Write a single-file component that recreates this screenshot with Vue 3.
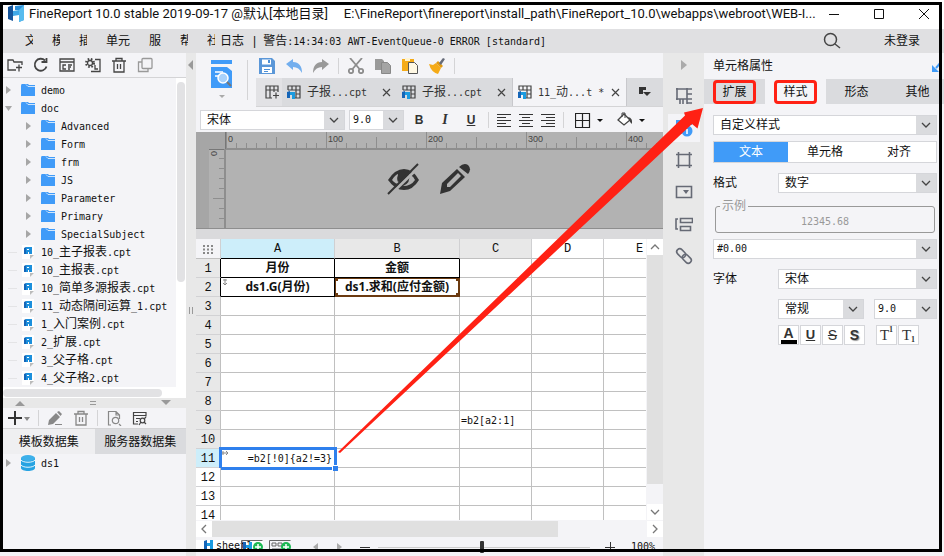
<script setup>
import { h } from 'vue'

// Latin runs are set in a half-width mono face, Chinese runs in the full-width face.
const Mixed = (props) =>
  h('span', { class: 'mixed' }, props.text.match(/[\x20-\x7e]+|[^\x20-\x7e]+/g).map((run) =>
    h('span', { class: run.charCodeAt(0) < 127 ? 'latin' : 'han' }, run)))
Mixed.props = ['text']

const menus = [
  { label: '文', cut: true }, { label: '模', cut: true }, { label: '插', cut: true },
  { label: '单元', cut: false }, { label: '服', cut: false },
  { label: '帮', cut: true }, { label: '社', cut: true }
]
const tree = [
  { name: 'demo', kind: 'folder', depth: 0 },
  { name: 'doc', kind: 'folder', depth: 0, open: true },
  ...['Advanced', 'Form', 'frm', 'JS', 'Parameter', 'Primary', 'SpecialSubject']
    .map((name) => ({ name, kind: 'folder', depth: 1 })),
  ...['10_主子报表.cpt', '10_主报表.cpt', '10_简单多源报表.cpt', '11_动态隔间运算_1.cpt',
    '1_入门案例.cpt', '2_扩展.cpt', '3_父子格.cpt', '4_父子格2.cpt']
    .map((name) => ({ name, kind: 'file', depth: 0 }))
]
const docs = [
  { name: '子报...cpt' }, { name: '子报...cpt' }, { name: '11_动...t *', active: true }
]
const columns = ['A', 'B', 'C', 'D', 'E']
const cells = {
  A1: '月份', B1: '金额', A2: 'ds1.G(月份)', B2: 'ds1.求和(应付金额)',
  C9: '=b2[a2:1]', A11: '=b2[!0]{a2!=3}'
}
const cellClass = (c, r) => ({
  boxed: r <= 2 && (c === 'A' || c === 'B'),
  linked: c + r === 'B2',
  chosen: c + r === 'A11'
})
const ticks = Array.from({ length: 120 }, (_, i) => i)
const tickSize = (i) => (i % 10 === 0 ? 16 : i % 5 === 0 ? 11 : 5)
const propTabs = [
  { label: '扩展', mark: true }, { label: '样式', mark: true, active: true },
  { label: '形态' }, { label: '其他' }
]
</script>

<template>
  <div class="app">
    <header class="title">
      <svg class="logo" width="16" height="17" viewBox="0 0 16 17"><path d="M0 2l5-2v16l-5-2z" fill="#15549a"/><path d="M5 6l6-1v5l-6 1z" fill="#3fa9e8"/><path d="M7 1l9-1v15l-5 2V5H7z" fill="#2b8fd9"/><path d="M11 5l5-5v15l-5 2z" fill="#57bbee"/></svg>
      <span class="name">FineReport 10.0 stable 2019-09-17 @默认[本地目录]</span>
      <span class="path">E:\FineReport\finereport\install_path\FineReport_10.0\webapps\webroot\WEB-I...</span>
      <div class="window">
        <button aria-label="最小化"><svg width="12" height="12"><path d="M1 6.500h10" stroke="#111"/></svg></button>
        <button aria-label="最大化"><svg width="12" height="12"><path d="M1.500 1.500h9v9h-9z" stroke="#111" fill="none"/></svg></button>
        <button aria-label="关闭"><svg width="12" height="12"><path d="M1 1l10 10M11 1L1 11" stroke="#111"/></svg></button>
      </div>
    </header>

    <nav class="menu">
      <button v-for="m in menus" :key="m.label" :class="{ cut: m.cut }">{{ m.label }}</button>
      <button class="log">日志</button>
      <span class="bar">|</span>
      <Mixed text="警告:14:34:03 AWT-EventQueue-0 ERROR [standard]" />
      <button class="search" aria-label="搜索"><svg width="18" height="18" fill="none" stroke="#444" stroke-width="1.500"><circle cx="7.500" cy="7.500" r="6"/><path d="M12 12l5 4"/></svg></button>
      <a class="login" href="#">未登录</a>
    </nav>

    <div class="body">
      <aside class="left">
        <div class="tools">
          <button aria-label="新建文件夹"><svg width="16" height="16" fill="none" stroke="#444" stroke-width="1.300"><path d="M9 13H1V3h5l1 2h8v3M9 10.500h6M12 7.500v7"/></svg></button>
          <button aria-label="刷新"><svg width="16" height="16" fill="none" stroke="#444" stroke-width="1.800"><path d="M13.500 9.500A6 6 0 1 1 12 3.500M13.500 1v4h-5"/></svg></button>
          <button aria-label="目录"><svg width="16" height="16" fill="none" stroke="#444" stroke-width="1.300"><path d="M1 2h14v12H1zM1 5h14M7 8H4v4h3M9 8h4M9 10h3M9 12h2"/></svg></button>
          <button aria-label="设置"><svg width="16" height="16" fill="none" stroke="#444" stroke-width="1.300"><circle cx="5" cy="6" r="2.500"/><circle cx="5" cy="6" r="4" stroke-width="2" stroke-dasharray="1.600 1.600"/><path d="M10 2.500h5v12H6M10 8v4h3"/></svg></button>
          <button aria-label="删除"><svg width="16" height="16" fill="none" stroke="#444" stroke-width="1.300"><path d="M1 4h14M5 4V1.500h6V4M3 4v11h10V4M6.500 7v5M9.500 7v5"/></svg></button>
          <button aria-label="复制"><svg width="16" height="16" fill="none" stroke="#999" stroke-width="1.300"><rect x="5" y="1.500" width="10" height="10" rx="1"/><path d="M5 5H1.500v9.500H11v-3"/></svg></button>
        </div>
        <div class="tree-area">
          <ul class="tree">
            <li v-for="n in tree" :key="n.name" :class="{ child: n.depth }">
              <svg class="twist" width="18" height="18"><path v-if="n.kind === 'file'" d="M5 9.500h9" stroke="#e4e4e6"/><path v-else-if="n.open" d="M2 7h7l-3.500 5z" fill="#a6a6a6"/><path v-else d="M3 5v8l5-4z" fill="#a6a6a6"/></svg>
              <svg v-if="n.kind === 'folder'" width="14" height="14"><path d="M0 3q0-2 1-2h6l1 1h6v11H0z" fill="#409bf8"/><path d="M5 1.500l2 2h7" stroke="#cfe5fc" fill="none"/></svg>
              <svg v-else width="14" height="14"><path d="M1 0h12v10l-4 4H1z" fill="#fff"/><path d="M13 10l-4 4v-4z" fill="#bbb"/><path d="M3 3l2-1v7H3z" fill="#1565b8"/><path d="M5 2h6v7H8V7H7v2H5z" fill="#1b8fdc"/><path d="M6 4h2v1H6z" fill="#fff"/></svg>
              <Mixed :text="n.name" />
            </li>
          </ul>
          <div class="track-v"><i></i></div>
        </div>
        <div class="track-h"><i></i></div>
        <div class="grip"><svg width="10" height="6"><path d="M0 6l5-5 5 5z" fill="#999"/></svg><svg width="8" height="6"><path d="M1 1.500h6M1 4.500h6" stroke="#999"/></svg><svg width="10" height="6"><path d="M0 0h10L5 5z" fill="#999"/></svg></div>
        <div class="tools data">
          <button aria-label="添加"><svg width="22" height="16"><path d="M0 8h14M7 1v14" stroke="#333" stroke-width="2"/><path d="M16 7h6l-3 4z" fill="#888"/></svg></button>
          <i></i>
          <button aria-label="编辑"><svg width="16" height="16"><path d="M1 15l1-5 7-7 4 4-7 7zM10 2l2-1 3 3-1.500 2zM8 14h7v1H8z" fill="#888"/></svg></button>
          <button class="bin" aria-label="删除"><svg width="16" height="16" fill="none" stroke="#888" stroke-width="1.300"><path d="M1 4h14M5 4V1.500h6V4M3 4v11h10V4M6.500 7v5M9.500 7v5"/></svg></button>
          <i></i>
          <button aria-label="预览"><svg width="16" height="16" fill="none" stroke="#888" stroke-width="1.200"><path d="M5 15H2.500V1.500H10l3.500 3.500v4M10 1.500V5h3.500M13 14l2 2"/><circle cx="9.500" cy="10.500" r="3.200"/></svg></button>
          <button class="bin" aria-label="连接"><svg width="16" height="16" fill="none" stroke="#444" stroke-width="1.200"><path d="M6 14H1.500V2.500h12.500v4M1.500 5.500H14M4 8.500h4M4 11.500h2"/><circle cx="10.500" cy="10.500" r="2.300"/><path d="M12 9l2-2M9 12l-2 3M12 12l2 2"/></svg></button>
        </div>
        <div class="sets" role="tablist">
          <button role="tab" aria-selected="true" class="on">模板数据集</button>
          <button role="tab">服务器数据集</button>
        </div>
        <ul class="tree source">
          <li>
            <svg class="twist" width="18" height="18"><path d="M3 5v8l5-4z" fill="#a6a6a6"/></svg>
            <svg width="14" height="16"><path d="M0 3v10c0 4 14 4 14 0V3z" fill="#27a3e2"/><ellipse cx="7" cy="3" rx="7" ry="3" fill="#3db0ea"/><path d="M0 5c2 3 12 3 14 0M0 10c2 3 12 3 14 0" stroke="#e8f6fd" fill="none"/></svg>
            <Mixed text="ds1" />
          </li>
        </ul>
      </aside>

      <div class="splitter"><svg class="fold" width="6" height="10"><path d="M5 0v10L0 5z" fill="#999"/></svg><svg class="hold" width="4" height="7"><path d="M.5 0v7M3.500 0v7" stroke="#999"/></svg></div>

      <main class="center">
        <div class="top">
          <button class="preview" aria-label="预览">
            <svg width="22" height="40"><path d="M0 0h21v4H0zM0 7h16l5 4v17H0z" fill="#409bf8"/><path d="M4 12h8M4 16h4" stroke="#fff" stroke-width="1.500"/><circle cx="12" cy="18" r="5" fill="#a9d2fb" stroke="#fff" stroke-width="1.500"/><path d="M16 22l4 4" stroke="#777" stroke-width="2"/><path d="M8 35h6l-3 3z" fill="#aaa"/></svg>
          </button>
          <div class="stack">
            <div class="actions">
              <button aria-label="保存"><svg width="16" height="16"><path d="M0 0h13l3 3v13H0z" fill="#5b97d8"/><path d="M3 1.500h9v5H3zM3 9h10v6H3z" fill="#fff"/><path d="M9 2h2v3H9zM5 11h6v1H5zM5 13h4v1H5z" fill="#4d8fd6"/></svg></button>
              <button aria-label="撤销"><svg width="16" height="16"><path d="M0 6l7-5v3c6 0 9 4 9 11-2-4-5-6-9-6v3z" fill="#72aeee"/></svg></button>
              <button aria-label="重做"><svg width="16" height="16"><path d="M16 6L9 1v3C3 4 0 8 0 15c2-4 5-6 9-6v3z" fill="#999"/></svg></button>
              <i></i>
              <button aria-label="剪切"><svg width="16" height="16" fill="none" stroke="#8c8c8c" stroke-width="1.800"><circle cx="3" cy="13" r="2.200"/><circle cx="13" cy="13" r="2.200"/><path d="M2 0l9.500 11M14 0L4.500 11"/></svg></button>
              <button aria-label="复制"><svg width="16" height="16"><path d="M0 1h7l2 2v9H0z" fill="#999"/><path d="M6.500 4.500h6l3 3v8h-9z" fill="#a4a4a4" stroke="#888"/></svg></button>
              <button aria-label="粘贴"><svg width="16" height="16"><path d="M0 1h12v12H0z" fill="#f5ab18"/><path d="M3 0h5v3H3z" fill="#fff3d0"/><path d="M6.500 4.500h6l3 3v8h-9z" fill="#fff8e4" stroke="#555"/></svg></button>
              <button aria-label="格式刷"><svg width="16" height="16"><path d="M0 6l4 1 3-2 5 5-3 6q-7-2-9-10z" fill="#f5ab18"/><path d="M7 5l2-2 5 5-2 2z" fill="#e29a10"/><path d="M10 5l4-5 2 1-4 6z" fill="#666b78"/></svg></button>
              <i></i>
            </div>
            <div class="docs" role="tablist">
              <button class="add" aria-label="新建"><svg width="14" height="14" fill="none" stroke="#444" stroke-width="1.200"><path d="M7 13H1V1h12v6M1 5h12M5 1v12M9 1v6M8 10.500h6M11 7.500v6"/></svg></button>
              <div v-for="(d, i) in docs" :key="i" class="doc" :class="{ on: d.active }">
                <svg width="14" height="14"><path d="M1 5V1h12v12H8M1 5h12M5 1v4M9 1v12M9 9h4" fill="none" stroke="#444" stroke-width="1.200"/><path d="M0 7l3-1v7H0z" fill="#1565b8"/><path d="M3 7h5v7H5v-4H3z" fill="#1b9be0"/></svg>
                <button role="tab" :aria-selected="!!d.active"><Mixed :text="d.name" /></button>
                <button class="close" aria-label="关闭"><svg width="9" height="9"><path d="M1 1l7 7M8 1L1 8" stroke="#444" stroke-width="1.200"/></svg></button>
              </div>
              <button class="more" aria-label="更多"><svg width="12" height="12"><path d="M0 1h7v3H4v4H0z" fill="#333"/><path d="M4 6h8l-4 4z" fill="#333"/></svg></button>
            </div>
          </div>
        </div>

        <div class="format">
          <label class="combo font"><select aria-label="字体"><option>宋体</option></select><svg width="20" height="18"><path d="M6 7l4 4 4-4" /></svg></label>
          <label class="combo size latin"><select aria-label="字号"><option>9.0</option></select><svg width="20" height="18"><path d="M6 7l4 4 4-4" /></svg></label>
          <button class="b">B</button><button class="it">I</button><button class="u">U</button>
          <i></i>
          <button aria-label="左对齐"><svg width="16" height="14"><path d="M1 1.500h14M1 4.500h9M1 7.500h14M1 10.500h9M1 13.500h14" stroke="#333"/></svg></button>
          <button aria-label="居中"><svg width="16" height="14"><path d="M1 1.500h14M4 4.500h8M1 7.500h14M4 10.500h8M1 13.500h14" stroke="#333"/></svg></button>
          <button aria-label="右对齐"><svg width="16" height="14"><path d="M1 1.500h14M6 4.500h9M1 7.500h14M6 10.500h9M1 13.500h14" stroke="#333"/></svg></button>
          <i></i>
          <button class="wide" aria-label="边框"><svg width="28" height="16"><path d="M.5 1.500h14v14H.5zM7.500 1.500v14M.5 8.500h14" stroke="#222" stroke-width="1.200" fill="none"/><path d="M22 7h6l-3 3z" fill="#111"/></svg></button>
          <button class="wide" aria-label="填充"><svg width="28" height="16"><path d="M1 8l6-6 6 6-6 5z" fill="#fff" stroke="#444" stroke-width="1.300"/><path d="M5 5V1h3v5" fill="none" stroke="#444"/><path d="M11 5q5 1 4 7l-2-2z" fill="#444"/><path d="M22 7h6l-3 3z" fill="#111"/></svg></button>
        </div>

        <section class="params">
          <div class="corner"></div>
          <svg class="ruler-h" width="100%" height="18">
            <g v-for="i in ticks" :key="i"><path :d="`M${i * 10 + .5} 16v-${tickSize(i)}`" stroke="#8e8e8e"/><text v-if="i % 10 === 0" :x="i * 10 + 2" y="10">{{ i * 10 }}</text></g>
            <path d="M0 17h2000" stroke="#8e8e8e" stroke-width="2"/>
          </svg>
          <svg class="ruler-v" width="30" height="100%">
            <rect width="13" height="100%" fill="#a6a6a6"/>
            <path d="M13 .5h17" stroke="#777"/>
            <path v-for="i in 7" :key="i" :d="`M28 ${i * 10 - .5}h-${tickSize(i)}`" stroke="#8e8e8e"/>
            <text transform="translate(21 7) rotate(-90)">0</text>
            <path d="M29 0v200" stroke="#8e8e8e" stroke-width="2"/>
          </svg>
          <div class="canvas">
            <svg width="34" height="32"><path d="M1 17Q8 6 17 6t15 11Q26 27 17 27T1 17z" fill="#333"/><path d="M5 17q3-5 6-6-1 8 3 11-6-1-9-5zM22 11q4 2 6 6-4 6-12 6 8-3 6-12z" fill="#b2b2b2"/><path d="M12 10q5-3 8 1l-9 8q-2-4 1-9z" fill="#333"/><path d="M3 32L33 3" stroke="#b2b2b2" stroke-width="3"/><path d="M1 31L31 1" stroke="#333" stroke-width="2"/></svg>
            <svg width="32" height="32"><path d="M1 31l2-11L18 6l8 8-15 14z" fill="#333"/><path d="M8 21L19 10l3 3-11 11-3 0z" fill="#b2b2b2"/><path d="M20 4q5-5 9-2 4 4 0 9z" fill="#333"/></svg>
          </div>
        </section>

        <div class="grid-wrap">
          <div class="sheet">
            <table>
              <colgroup><col class="c0"><col class="ca"><col class="cb"><col class="cc"><col class="cc"><col class="cc"></colgroup>
              <thead>
                <tr><th class="all"><svg width="12" height="10"><path d="M1 2h10M1 5.500h10M1 9h10" stroke="#888" stroke-width="2" stroke-dasharray="2"/></svg></th><th v-for="c in columns" :key="c" :class="'h' + c"><span class="latin">{{ c }}</span></th></tr>
              </thead>
              <tbody>
                <tr v-for="r in 14" :key="r">
                  <th :class="{ current: r === 11, blank: r > 11, ink: r <= 2 }"><span class="latin">{{ r }}</span></th>
                  <td v-for="c in columns" :key="c" :class="cellClass(c, r)">
                    <template v-if="cells[c + r]"><b v-if="r <= 2">{{ cells[c + r] }}</b><Mixed v-else :text="cells[c + r]" /></template>
                    <svg v-if="c === 'A' && r === 2" class="dir" width="6" height="7"><path d="M3 0v6M1 4l2 2 2-2M1 1h4" stroke="#888" fill="none"/></svg>
                    <svg v-if="c === 'A' && r === 11" class="dir" width="7" height="6"><path d="M0 3h6M4 1l2 2-2 2M1 1v4" stroke="#888" fill="none"/></svg>
                  </td>
                </tr>
              </tbody>
            </table>
          </div>
          <div class="scroll-v">
            <button aria-label="上"><svg width="10" height="8"><path d="M1 6l4-4 4 4" /></svg></button>
            <i></i>
            <button aria-label="下"><svg width="10" height="8"><path d="M1 2l4 4 4-4" /></svg></button>
          </div>
        </div>
        <div class="scroll-h">
          <button aria-label="左"><svg width="8" height="10"><path d="M6 1L2 5l4 4" /></svg></button>
          <i></i>
          <button aria-label="右"><svg width="8" height="10"><path d="M2 1l4 4-4 4" /></svg></button>
        </div>
        <footer class="status">
          <div class="sheet-tab">
            <svg width="9" height="10"><path d="M0 1l3-1v10H0z" fill="#1565b8"/><path d="M3 3h3V0h3v10H6V6H3z" fill="#1b9be0"/></svg>
            <span class="latin">sheet1</span>
            <button class="plus-sheet" aria-label="新增"><svg width="22" height="14"><path d="M.5 12V.5h21" fill="none" stroke="#666"/><path d="M2 2h3v10H2z" fill="#1565b8"/><path d="M5 5h3V2h3v10H8V8H5z" fill="#1b9be0"/><circle cx="17" cy="7" r="5" fill="#1db954"/><path d="M14 7h6M17 4v6" stroke="#fff" stroke-width="1.500"/></svg></button>
          </div>
          <button aria-label="新增表单"><svg width="22" height="14"><path d="M.5 12V.5h21M3 3h4v3H3zM9 3h4v3H9zM3 9h9" fill="none" stroke="#666"/><circle cx="17" cy="7" r="5" fill="#1db954"/><path d="M14 7h6M17 4v6" stroke="#fff" stroke-width="1.500"/></svg></button>
          <button class="prev" aria-label="上一页"><svg width="5" height="8"><path d="M5 0v8L0 4z" fill="#aaa"/></svg></button>
          <button class="next" aria-label="下一页"><svg width="5" height="8"><path d="M0 0v8l5-4z" fill="#aaa"/></svg></button>
          <button class="minus" aria-label="缩小"><svg width="10" height="10"><path d="M0 5.500h10" stroke="#333"/></svg></button>
          <input type="range" min="0" max="100" value="49" aria-label="缩放">
          <button aria-label="放大"><svg width="10" height="10"><path d="M0 5.500h10M5.500 0v10" stroke="#333"/></svg></button>
          <span class="latin zoom">100%</span>
        </footer>
      </main>

      <nav class="strip">
        <button aria-label="收起"><svg width="6" height="10"><path d="M0 0v10l6-5z" fill="#aaa"/></svg></button>
        <button aria-label="单元格元素"><svg width="18" height="18"><path d="M2 1v12M17 2H1M1 12h16M8 12v5M5 12v5M12 1v16M12 7h5M12 16h5" /></svg></button>
        <button class="on" aria-label="单元格属性"><svg width="18" height="18"><path class="f" d="M1 1h7v6H1zM10 1h7v5h-7zM1 9h6v6H1z"/><circle class="f" cx="12" cy="12" r="5.500"/><path d="M12 10v5M12 8v1" class="w"/></svg></button>
        <button aria-label="悬浮元素"><svg width="18" height="18"><path d="M3.500 1v16M14.500 1v16M1 3.500h16M1 14.500h16" /></svg></button>
        <button aria-label="控件设置"><svg width="18" height="18"><path d="M1.500 3.500h15v11h-15z"/><path d="M8 7h6l-3 4z" fill="#666a75" stroke="none"/></svg></button>
        <button aria-label="条件属性"><svg width="18" height="18"><path d="M5.500 3.500h12v4h-12zM5.500 11.500h10v4h-10zM3 4H1v10h2"/></svg></button>
        <button aria-label="超级链接"><svg width="18" height="18"><g transform="rotate(45 9 9)"><rect x="0" y="6" width="10" height="6" rx="3"/><rect x="8" y="6" width="10" height="6" rx="3"/></g></svg></button>
      </nav>

      <aside class="right">
        <h2>单元格属性<svg width="10" height="12"><path d="M10 1L4 8" stroke="#409bf8" stroke-width="2"/><path d="M0 5v7h7z" fill="#409bf8"/></svg></h2>
        <div class="ptabs" role="tablist">
          <button v-for="t in propTabs" :key="t.label" role="tab" :class="{ on: t.active }"><span :class="{ mark: t.mark }">{{ t.label }}</span></button>
        </div>
        <form class="form" @submit.prevent>
          <label class="combo"><select aria-label="样式"><option>自定义样式</option></select><svg width="20" height="18"><path d="M6 7l4 4 4-4" /></svg></label>
          <div class="seg"><button class="on">文本</button><button>单元格</button><button>对齐</button></div>
          <div class="line"><label for="fmt">格式</label><span class="combo"><select id="fmt"><option>数字</option></select><svg width="20" height="18"><path d="M6 7l4 4 4-4" /></svg></span></div>
          <fieldset><legend>示例</legend><span class="latin sample">12345.68</span></fieldset>
          <label class="combo latin pattern"><select aria-label="数字格式"><option>#0.00</option></select><svg width="20" height="18"><path d="M6 7l4 4 4-4" /></svg></label>
          <div class="line"><label for="face">字体</label><span class="combo"><select id="face"><option>宋体</option></select><svg width="20" height="18"><path d="M6 7l4 4 4-4" /></svg></span></div>
          <div class="line pair"><span class="combo"><select aria-label="字形"><option>常规</option></select><svg width="20" height="18"><path d="M6 7l4 4 4-4" /></svg></span><span class="combo latin short"><select aria-label="字号"><option>9.0</option></select><svg width="20" height="18"><path d="M6 7l4 4 4-4" /></svg></span></div>
          <div class="marks">
            <button class="color">A</button><button class="u">U</button><button class="s">S</button><button class="shadow">S</button>
            <button class="t">T<sup>1</sup></button><button class="t">T<sub>1</sub></button>
          </div>
        </form>
      </aside>
    </div>

    <svg class="pointer" width="944" height="556" aria-hidden="true"><path d="M338 452L685 115.500 684 112.500 703 108 697.500 128.500 692 124 340 453z" fill="#ff2114"/></svg>
    <div class="frame"></div>
  </div>
</template>

<style>
body { background: #f4f4f7; }
.latin { font-family: "DejaVu Sans Mono", monospace; font-size: 10px; white-space: pre; }
</style>

<style scoped>
.app { position: relative; height: 100vh; display: flex; flex-direction: column; overflow: hidden; background: #f4f4f7; color: #111; font: 12px/18px "Liberation Sans", "Noto Sans CJK SC", sans-serif; }
.app *, .app *::before { box-sizing: border-box; }
button { border: 0; padding: 0; background: none; font: inherit; color: inherit; display: flex; align-items: center; justify-content: center; flex: none; white-space: nowrap; }
svg { flex: none; display: block; }
ul { list-style: none; margin: 0; padding: 0; }
i { display: block; }
.frame { position: absolute; inset: 2px 2px 4px 0; border: 3px solid #000; pointer-events: none; }
.pointer { position: absolute; left: 0; top: 0; pointer-events: none; }

.title { flex: none; height: 29px; padding: 0 14px 2px 8px; display: flex; align-items: center; background: #fff; font-family: Roboto, "Noto Sans CJK SC", sans-serif; font-size: 13px; white-space: nowrap; }
.title .name { margin-left: 5px; }
.title .path { margin-left: 16px; }
.window { margin-left: auto; display: flex; gap: 33px; }
.menu { flex: none; height: 24px; display: flex; align-items: center; padding-left: 25px; background: #e0e0e2; white-space: nowrap; }
.menu button { margin-right: 19px; }
.menu .cut { width: 8px; overflow: hidden; justify-content: flex-start; }
.menu .cut:nth-of-type(7) { margin-right: 5px; }
.menu .log { margin-right: 9px; }
.menu .bar { margin-right: 7px; }
.menu .search { margin: 0 43px 0 auto; }
.login { color: inherit; text-decoration: none; margin-right: 24px; }

.body { flex: 1; min-height: 0; display: flex; }
.left { width: 186px; flex: none; display: flex; flex-direction: column; padding-left: 3px; }
.tools { flex: none; height: 25px; display: flex; align-items: center; gap: 10px; padding-left: 4px; border-bottom: 1px solid #d4d4d6; }
.tree-area { display: flex; flex: none; }
.tree { flex: 1; min-width: 0; padding-top: 3px; }
.tree li { height: 18px; display: flex; align-items: center; white-space: nowrap; }
.tree li.child { padding-left: 20px; }
.tree li svg:nth-child(2) { margin-right: 6px; }
.track-v { width: 10px; background: #fff; padding: 4px 1px 0; }
.track-v i { height: 200px; border-radius: 4px; background: #e2e2e4; }
.track-h { flex: none; height: 11px; padding: 2px 24px 1px 0; background: #fff; }
.track-h i { height: 8px; border-radius: 4px; background: #e2e2e4; }
.grip { flex: none; height: 10px; padding: 0 15px 0 12px; display: flex; align-items: center; justify-content: space-between; background: #e8e8e8; }
.tools.data { height: 21px; gap: 8px; padding-left: 5px; }
.tools.data .bin { margin-left: 2px; }
.tools.data i, .actions i, .format i { width: 1px; height: 16px; background: #d4d4d6; }
.sets { flex: none; display: flex; height: 25px; }
.sets button { flex: 1; background: #dadbde; }
.sets .on { background: #efeff1; }
.source { padding-top: 0; }
.splitter { width: 10px; flex: none; display: flex; flex-direction: column; align-items: center; background: #e8e8e8; padding-top: 7px; }
.hold { margin-top: 237px; }

.center { flex: 1; min-width: 0; display: flex; flex-direction: column; }
.top { display: flex; flex: none; }
.preview { width: 52px; height: 40px; margin: 7px 8px 0 0; border-right: 1px solid #d4d4d6; }
.stack { flex: 1; min-width: 0; }
.actions { height: 25px; display: flex; align-items: center; gap: 11px; padding-left: 3px; }
.actions i { margin: 0 -2px; }
.docs { height: 29px; display: flex; background: #dadbde; border-bottom: 1px solid #d4d4d6; color: #333; }
.docs .add { width: 26px; padding-left: 6px; background: #e2e2e5; }
.doc { width: 115px; display: flex; align-items: center; padding: 0 6px 0 5px; }
.doc.on { background: #f4f4f7; border-left: 1px solid #c8c8cc; border-right: 1px solid #c8c8cc; }
.doc > svg { margin-right: 6px; }
.doc .close { margin-left: auto; }
.docs .more { flex: 1; }
.format { flex: none; height: 25px; display: flex; align-items: center; padding-left: 4px; gap: 4px; }
.format button { width: 22px; font-family: "Liberation Sans", sans-serif; font-weight: bold; color: #333; }
.format .size { width: 55px; }
.format .font { width: 145px; }
.format .it { font-family: "Liberation Serif", serif; font-style: italic; font-size: 14px; }
.format .u { text-decoration: underline; }
.format i { margin: 0 2px; }
.format i ~ button { width: 18px; }
.format button.wide { width: 38px; }

.combo { position: relative; display: grid; grid-template-columns: minmax(0, 1fr) 20px; height: 20px; border: 1px solid #d5d6da; background: #fff; color: #111; }
.combo select { grid-area: 1 / 1 / 2 / 3; width: 100%; height: 18px; appearance: none; border: 0; padding: 0 0 0 6px; background: none; font: inherit; color: inherit; }
.combo.latin select { padding-left: 3px; }
.combo svg { grid-area: 1 / 2; background: #dadbde; pointer-events: none; }
.combo path { fill: none; stroke: #444; stroke-width: 1.300; }

.params { flex: none; height: 97px; display: grid; grid-template: 17px 1fr / 30px minmax(0, 1fr); background: #b2b2b2; border-bottom: 1px solid #8e8e8e; overflow: hidden; }
.corner { background: #a6a6a6; border-right: 1px solid #777; }
.params text { font: 9px "Liberation Sans", sans-serif; fill: #444; }
.canvas { display: flex; gap: 18px; padding: 14px 0 0 161px; }

.grid-wrap { flex: 1; min-height: 0; display: flex; border-top: 10px solid #dadadc; }
.sheet { flex: 1; min-width: 0; overflow: hidden; background: #fff; }
table { border-collapse: separate; border-spacing: 0; table-layout: fixed; width: 480px; }
.c0 { width: 25px; } .ca { width: 114px; } .cb { width: 125px; } .cc { width: 72px; }
th, td { height: 19px; padding: 0; border: solid #c0c0c0; border-width: 0 1px 1px 0; line-height: 16px; white-space: nowrap; font-weight: normal; text-align: center; position: relative; }
th { background: #e8e8e8; border-bottom-color: #d2d2d4; }
th .latin { font-size: 12px; font-family: "Liberation Mono", monospace; }
thead th { height: 20px; border-color: #d0d0d2; border-bottom-color: #c0c0c0; }
th.all { background: #f4f4f7; }
.all svg { margin: auto; }
th.hA { background: #cdeefa; border-bottom-color: #000; }
th.hB { border-bottom-color: #000; }
th.hD, th.hE, th.blank { background: #fff; }
th.current { background: #cdeefa; }
th.ink { border-right-color: #000; }
td { text-align: left; padding-left: 1px; }
td.boxed { border-color: #000; text-align: center; font-family: "Noto Sans", "Noto Sans CJK SC", sans-serif; padding: 0; }
td.linked { outline: 1px solid #6b3a10; outline-offset: -1px; box-shadow: inset 0 0 0 1px #6b3a10; }
td.linked::before { content: ""; position: absolute; inset: 0; background: linear-gradient(#6b3a10, #6b3a10) 0 0 / 3px 3px no-repeat, linear-gradient(#6b3a10, #6b3a10) 100% 0 / 3px 3px no-repeat, linear-gradient(#6b3a10, #6b3a10) 0 100% / 3px 3px no-repeat, linear-gradient(#6b3a10, #6b3a10) 100% 100% / 3px 3px no-repeat; }
td.chosen { text-align: right; padding-right: 2px; outline: 3px solid #2f80ed; outline-offset: -1px; }
td.chosen::before { content: ""; position: absolute; right: -4px; bottom: -4px; width: 6px; height: 6px; background: #2f80ed; border: solid #fff; border-width: 1px 0 0 1px; z-index: 1; }
.dir { position: absolute; left: 1px; top: 1px; }
.scroll-v { width: 17px; flex: none; display: flex; flex-direction: column; padding-left: 1px; }
.scroll-v i { flex: 1; margin-bottom: 20px; background: #e0e0e0; }
.scroll-v button, .scroll-h button { width: 16px; height: 16px; background: #fff; }
.scroll-v path, .scroll-h path { fill: none; stroke: #777; stroke-width: 1.300; }
.scroll-h { flex: none; display: flex; height: 17px; padding-top: 1px; }
.scroll-h i { flex: 1; margin-right: 89px; background: #e0e0e0; }
.status { flex: none; height: 19px; display: flex; align-items: flex-start; padding-top: 3px; }
.status button { height: 14px; }
.sheet-tab { width: 67px; margin-right: 6px; display: flex; padding-left: 8px; position: relative; background: #fff; }
.sheet-tab .latin { margin-left: 3px; line-height: 12px; }
.plus-sheet { position: absolute; right: 0; top: 0; }
.prev { margin-left: 22px; }
.next { margin-left: 19px; }
.minus { margin: 0 8px 0 18px; }
input[type="range"] { flex: 1; min-width: 0; margin: 0 15px 0 0; height: 14px; appearance: none; background: linear-gradient(#ccc, #ccc) 0 7px / 100% 1px no-repeat; }
input[type="range"]::-webkit-slider-thumb { appearance: none; width: 4px; height: 12px; border-radius: 1px; background: #333; }
.zoom { margin: 0 8px 0 16px; line-height: 14px; }

.strip { width: 41px; flex: none; display: flex; flex-direction: column; align-items: center; background: #e8e8e8; }
.strip button { width: 32px; height: 28px; margin-bottom: 4px; }
.strip button:first-child { height: 24px; margin-bottom: 5px; }
.strip svg { fill: none; stroke: #666a75; stroke-width: 1.600; }
.strip button:first-child svg { stroke: none; }
.strip .on { background: #f4f4f7; }
.strip .f { fill: #409bf8; stroke: none; }
.strip .w { stroke: #fff; }

.right { width: 240px; flex: none; }
h2 { margin: 0; height: 26px; padding: 0 2px 0 9px; display: flex; align-items: center; justify-content: space-between; font: inherit; }
.ptabs { display: flex; height: 25px; background: #dadbde; }
.ptabs button { flex: 1 0 61px; }
.ptabs .on { background: #f4f4f7; }
.mark { position: relative; }
.mark::before { content: ""; position: absolute; inset: -3px -9px; border: 3px solid #ff2114; border-radius: 4px; }
.form { padding: 11px 7px 0 9px; display: flex; flex-direction: column; }
.form .combo { flex: 1 0 auto; }
.seg { display: flex; height: 22px; margin: 6px 0 10px; border: 1px solid #d5d6da; background: #fff; }
.seg button { flex: 1; }
.seg .on { background: #409bf8; color: #fff; }
.line { display: flex; align-items: center; height: 20px; }
.line label { width: 65px; }
fieldset { margin: 4px 2px 6px; padding: 0 0 3px; min-width: 0; border: 1px solid #999; border-radius: 3px; color: #999; line-height: 14px; }
legend { margin-left: 4px; padding: 0 2px; line-height: 18px; }
.sample { display: block; text-align: center; }
.pattern { margin-bottom: 10px; }
.pair { margin: 10px 0 6px; padding-left: 65px; gap: 10px; }
.form .pair .short { flex: 0 0 63px; }
.marks { display: flex; gap: 1px; padding-left: 65px; }
.marks button { width: 21px; height: 20px; border: 1px solid #d5d6da; background: #fff; font: bold 14px/16px "Liberation Sans", sans-serif; color: #333; }
.marks .color { align-items: flex-start; line-height: 14px; background: linear-gradient(#000, #000) 50% 14px / 16px 4px no-repeat #fff; }
.marks .u { text-decoration: underline; font-size: 13px; }
.marks .s { text-decoration: line-through; font-weight: normal; }
.marks .shadow { text-shadow: 1px 1px 1px #999; margin-right: 10px; }
.marks .t { font: 15px/16px "Liberation Serif", serif; }
.t sup, .t sub { font-size: 8px; line-height: 8px; font-weight: bold; }
.t sup { align-self: flex-start; } .t sub { align-self: flex-end; }
</style>
